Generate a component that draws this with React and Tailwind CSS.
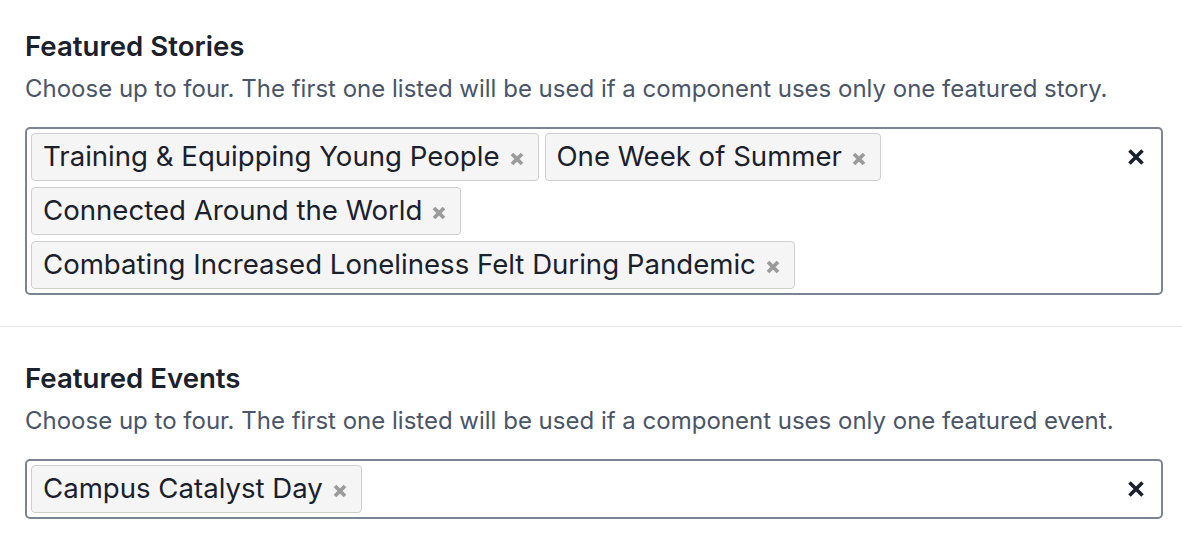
const stories = [
  "Training & Equipping Young People",
  "One Week of Summer",
  "Connected Around the World",
  "Combating Increased Loneliness Felt During Pandemic",
];

const events = ["Campus Catalyst Day"];

function SmallX() {
  return (
    <svg width="16" height="16" viewBox="0 0 16 16" className="mt-[3px] shrink-0">
      <path d="M3 3 L13 13 M13 3 L3 13" stroke="#9b9b9b" strokeWidth="3.8" />
    </svg>
  );
}

function BigX() {
  return (
    <svg width="18" height="18" viewBox="0 0 18 18">
      <path d="M2.5 2.5 L15.5 15.5 M15.5 2.5 L2.5 15.5" stroke="#1a202c" strokeWidth="3.6" />
    </svg>
  );
}

function Tag({ label }) {
  return (
    <div className="m-[3px] flex h-12 items-center gap-[9px] rounded border border-[#cfcfcf] bg-[#f5f5f5] pl-[11px] pr-[13px] text-[27.6px] text-[#1a202c]">
      <span>{label}</span>
      <SmallX />
    </div>
  );
}

function MultiSelect({ items }) {
  return (
    <div className="flex items-start rounded-[5px] border-2 border-[#7b8491] p-[1px]">
      <div className="flex flex-1 flex-wrap pr-[200px]">
        {items.map((t) => (
          <Tag key={t} label={t} />
        ))}
      </div>
      <div className="flex h-[54px] w-12 items-center justify-center">
        <BigX />
      </div>
    </div>
  );
}

function Field({ title, hint, items }) {
  return (
    <div className="pl-[25px] pr-[19px]">
      <h2 className="text-[27.6px] leading-9 font-semibold text-[#1a202c]">{title}</h2>
      <p className="mt-[9px] text-[24px] leading-8 text-[#4a5568]">{hint}</p>
      <div className="mt-[22px]">
        <MultiSelect items={items} />
      </div>
    </div>
  );
}

export default function App() {
  return (
    <div className="min-h-[548px] bg-white pt-[28px] font-['Inter',sans-serif]">
      <Field
        title="Featured Stories"
        hint="Choose up to four. The first one listed will be used if a component uses only one featured story."
        items={stories}
      />
      <div className="mt-[31px] border-t border-[#e5e7eb]" />
      <div className="pt-[33px]">
        <Field
          title="Featured Events"
          hint="Choose up to four. The first one listed will be used if a component uses only one featured event."
          items={events}
        />
      </div>
    </div>
  );
}
